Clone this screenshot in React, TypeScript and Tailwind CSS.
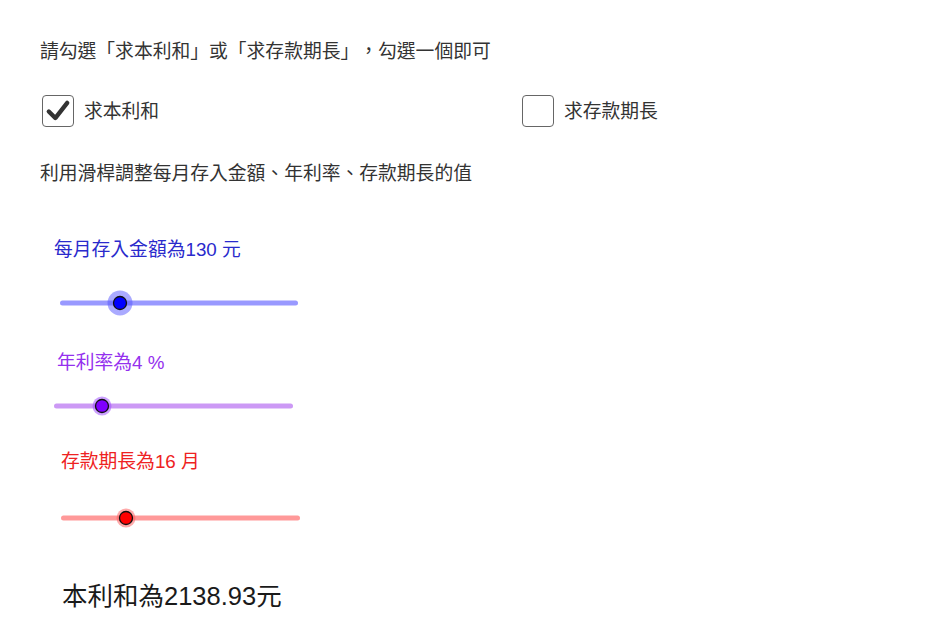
import React from 'react';

const font = { fontFamily: '"Liberation Sans", "Noto Sans CJK TC", sans-serif' };

const Checkbox: React.FC<{ checked?: boolean; label: string }> = ({ checked, label }) => (
    <div className="flex items-center gap-[10px]">
        <div className="flex h-[32px] w-[32px] items-center justify-center rounded-[4px] border-[1.5px] border-[#666666] bg-white">
            {checked && (
                <svg width="26" height="26" viewBox="0 0 24 24">
                    <path d="M3.5 12.5 L9.5 18.5 L20.5 4.5" fill="none" stroke="#333333" strokeWidth="4" strokeLinecap="round" strokeLinejoin="round" />
                </svg>
            )}
        </div>
        <span className="pt-[2px] text-[18.8px] leading-[24px] text-[#333333]">{label}</span>
    </div>
);

const Slider: React.FC<{
    width: number;
    pos: number;
    track: string;
    halo: string;
    haloR: number;
    knob: string;
    className: string;
}> = ({ width, pos, track, halo, haloR, knob, className }) => (
    <svg width={width} height="30" className={`block ${className}`}>
        <line x1="14.5" y1="15" x2={width - 14.5} y2="15" stroke={track} strokeWidth="5" strokeLinecap="round" />
        <circle cx={pos} cy="15" r={haloR} fill={halo} fillOpacity="0.5" />
        <circle cx={pos} cy="15" r="6.5" fill={knob} stroke="#111111" strokeWidth="1.3" />
    </svg>
);

const App: React.FC = () => (
    <div className="h-[639px] w-[931px] bg-white pt-[40px] [text-spacing-trim:space-all]" style={font}>
        <p className="ml-[40px] text-[18.8px] leading-[24px] text-[#333333]">請勾選「求本利和」或「求存款期長」，勾選一個即可</p>

        <div className="mt-[31px] flex">
            <div className="ml-[42px] w-[480px]">
                <Checkbox checked label="求本利和" />
            </div>
            <Checkbox label="求存款期長" />
        </div>

        <p className="ml-[40px] mt-[35px] text-[18.8px] leading-[24px] text-[#333333]">利用滑桿調整每月存入金額、年利率、存款期長的值</p>

        <p className="ml-[54px] mt-[52px] text-[18.8px] leading-[24px] text-[#2a2acc]">每月存入金額為130 元</p>
        <Slider className="ml-[48px] mt-[26px]" width={262} pos={72} track="#9999ff" halo="#5555ff" haloR={12.5} knob="#0000ff" />

        <p className="ml-[57px] mt-[33px] text-[18.8px] leading-[24px] text-[#9430ee]">年利率為4 %</p>
        <Slider className="ml-[42px] mt-[16px]" width={263} pos={60} track="#cc99f5" halo="#9944ff" haloR={9.5} knob="#7f00ff" />

        <p className="ml-[61px] mt-[29px] text-[18.8px] leading-[24px] text-[#ee2222]">存款期長為16 月</p>
        <Slider className="ml-[49px] mt-[29px]" width={263} pos={77} track="#ff9999" halo="#ff5555" haloR={9.5} knob="#ff0000" />

        <p className="ml-[62px] mt-[47px] text-[25.5px] leading-[32px] text-[#1a1a1a]">本利和為2138.93元</p>
    </div>
);

export default App;
